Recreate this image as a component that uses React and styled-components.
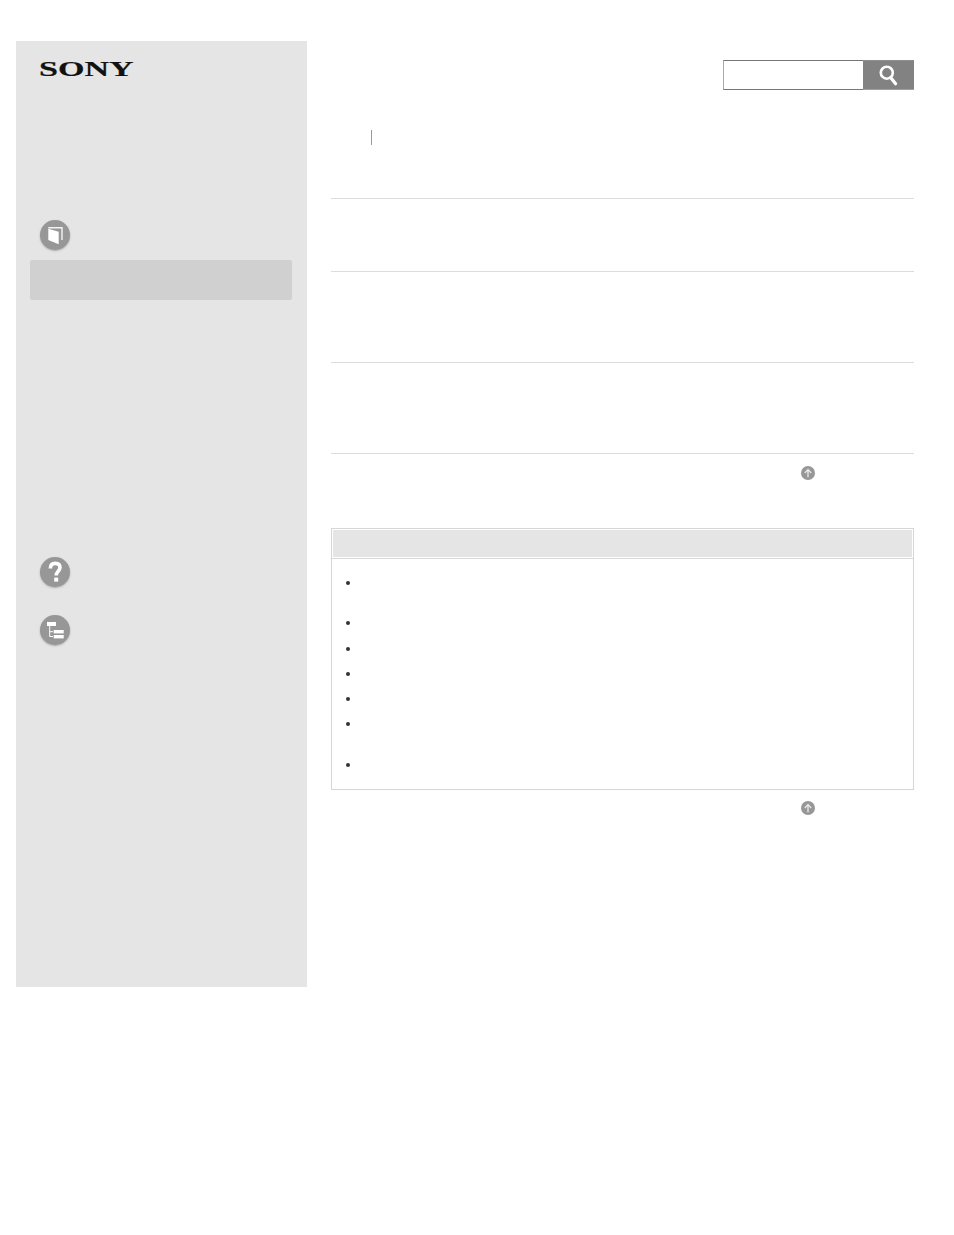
import styled, { createGlobalStyle } from "styled-components";

const GlobalStyle = createGlobalStyle`
  html, body {
    margin: 0;
    padding: 0;
    background: #ffffff;
    font-family: "Liberation Sans", Arial, sans-serif;
  }
`;

const Page = styled.div`
  display: flex;
  align-items: flex-start;
  gap: 24px;
  width: 954px;
  height: 1235px;
  box-sizing: border-box;
  padding: 41px 40px 0 16px;
`;

const Sidebar = styled.aside`
  display: flex;
  flex-direction: column;
  flex: none;
  width: 291px;
  height: 946px;
  box-sizing: border-box;
  padding: 21px 15px 0 14px;
  background: #e5e5e5;
`;

const Logo = styled.div`
  height: 14px;
  margin: 0 0 144px 9px;
  font-family: "Liberation Serif", serif;
  font-weight: 700;
  font-size: 22px;
  line-height: 14px;
  color: #111111;
  -webkit-text-stroke: 0.2px #111111;
  transform: scaleX(1.55);
  transform-origin: left center;
`;

const NavIcon = styled.div`
  display: flex;
  align-items: center;
  justify-content: center;
  width: 30px;
  height: 30px;
  margin-left: 10px;
  margin-top: ${(p) => p.$top || 0}px;
  border-radius: 50%;
  background: #979797;
  box-shadow: 0 1px 2px rgba(0, 0, 0, 0.25);
`;

const ActiveItem = styled.div`
  height: 40px;
  margin-top: 10px;
  border-radius: 2px;
  background: #d0d0d0;
`;

const Main = styled.main`
  display: flex;
  flex-direction: column;
  flex: 1;
  min-width: 0;
`;

const SearchRow = styled.div`
  display: flex;
  justify-content: flex-end;
  padding-top: 19px;
`;

const SearchInput = styled.input`
  width: 140px;
  height: 30px;
  box-sizing: border-box;
  padding: 0 4px;
  border: 1px solid #777777;
  border-right: none;
  border-left-color: #aaaaaa;
  border-radius: 0;
  outline: none;
  background: #ffffff;
`;

const SearchButton = styled.button`
  display: flex;
  align-items: center;
  justify-content: center;
  width: 51px;
  height: 30px;
  padding: 0;
  border: none;
  border-top: 1px solid #8f8f8f;
  border-bottom: 1px solid #a0a0a0;
  background: #828282;
`;

const Crumbs = styled.div`
  height: 15px;
  margin: 40px 0 53px 40px;
  border-left: 1px solid #999999;
`;

const Section = styled.section`
  height: ${(p) => p.$height}px;
  box-sizing: border-box;
  border-top: 1px solid #dddddd;
`;

const TopLinkRow = styled.div`
  display: flex;
  height: ${(p) => p.$height}px;
  box-sizing: border-box;
  padding: ${(p) => p.$pad}px 0 0 470px;
  border-top: ${(p) => (p.$ruled ? "1px solid #dddddd" : "none")};
`;

const TopIcon = styled.svg`
  display: block;
  width: 14px;
  height: 14px;
`;

const NoteBox = styled.div`
  height: 262px;
  box-sizing: border-box;
  padding: 1px;
  border: 1px solid #d6d6d6;
`;

const NoteHeader = styled.div`
  height: 27px;
  background: #e5e5e5;
`;

const NoteList = styled.ul`
  margin: 1px -1px 0;
  padding: 22px 0 0;
  list-style: none;
  border-top: 1px solid #d8d8d8;
`;

const NoteItem = styled.li`
  display: flex;
  align-items: flex-start;
  height: ${(p) => p.$height}px;
  padding-left: 14px;

  &::before {
    content: "";
    width: 4px;
    height: 4px;
    border-radius: 50%;
    background: #333333;
  }
`;

const BookIcon = () => (
  <svg width="18" height="20" viewBox="0 0 18 20">
    <path d="M2.3 2.7 H16 V15" fill="none" stroke="#f4f4f4" strokeWidth="1.4" />
    <path d="M2.3 3.7 L12.7 6.7 V19.3 L2.3 15 Z" fill="#ffffff" />
  </svg>
);

const HelpIcon = () => (
  <svg width="18" height="24" viewBox="0 0 18 24">
    <path
      d="M4.4 8.4 C4.4 5 6.4 3.4 9.2 3.4 C12.2 3.4 14 5 14 7.6 C14 11 10.2 11.4 10.2 15.4"
      fill="none"
      stroke="#ffffff"
      strokeWidth="3.6"
    />
    <rect x="8.2" y="17.6" width="4" height="4" fill="#ffffff" />
  </svg>
);

const TreeIcon = () => (
  <svg width="24" height="22" viewBox="0 0 24 22">
    <rect x="4" y="3" width="9" height="4" fill="#ffffff" />
    <path d="M6.7 7 V17.5 H10 M6.7 12.7 H10" fill="none" stroke="#ffffff" strokeWidth="1" />
    <rect x="10.7" y="11" width="10" height="3.4" fill="#ffffff" />
    <rect x="10.7" y="16" width="10" height="3.4" fill="#ffffff" />
  </svg>
);

const SearchGlyph = () => (
  <svg width="22" height="24" viewBox="0 0 22 24">
    <circle cx="8.8" cy="9.7" r="6" fill="none" stroke="#ffffff" strokeWidth="2.6" />
    <path d="M12.8 14.8 L17.6 20.8" fill="none" stroke="#ffffff" strokeWidth="3.2" strokeLinecap="round" />
  </svg>
);

const BackToTop = () => (
  <TopIcon viewBox="0 0 14 14">
    <circle cx="7" cy="7" r="7" fill="#979797" />
    <path d="M7 11.2 V3.8 M3.8 7 L7 3.6 L10.2 7" fill="none" stroke="#e6e6e6" strokeWidth="1.4" />
  </TopIcon>
);

const itemHeights = [40, 26, 25, 25, 25, 41, 24];

const App = () => (
  <>
    <GlobalStyle />
    <Page>
      <Sidebar>
        <Logo>SONY</Logo>
        <NavIcon>
          <BookIcon />
        </NavIcon>
        <ActiveItem />
        <NavIcon $top={257}>
          <HelpIcon />
        </NavIcon>
        <NavIcon $top={28}>
          <TreeIcon />
        </NavIcon>
      </Sidebar>
      <Main>
        <SearchRow>
          <SearchInput type="text" />
          <SearchButton type="button" aria-label="search">
            <SearchGlyph />
          </SearchButton>
        </SearchRow>
        <Crumbs />
        <Section $height={73} />
        <Section $height={91} />
        <Section $height={91} />
        <TopLinkRow $ruled $height={75} $pad={12}>
          <BackToTop />
        </TopLinkRow>
        <NoteBox>
          <NoteHeader />
          <NoteList>
            {itemHeights.map((height, i) => (
              <NoteItem key={i} $height={height} />
            ))}
          </NoteList>
        </NoteBox>
        <TopLinkRow $height={40} $pad={11}>
          <BackToTop />
        </TopLinkRow>
      </Main>
    </Page>
  </>
);

export default App;
